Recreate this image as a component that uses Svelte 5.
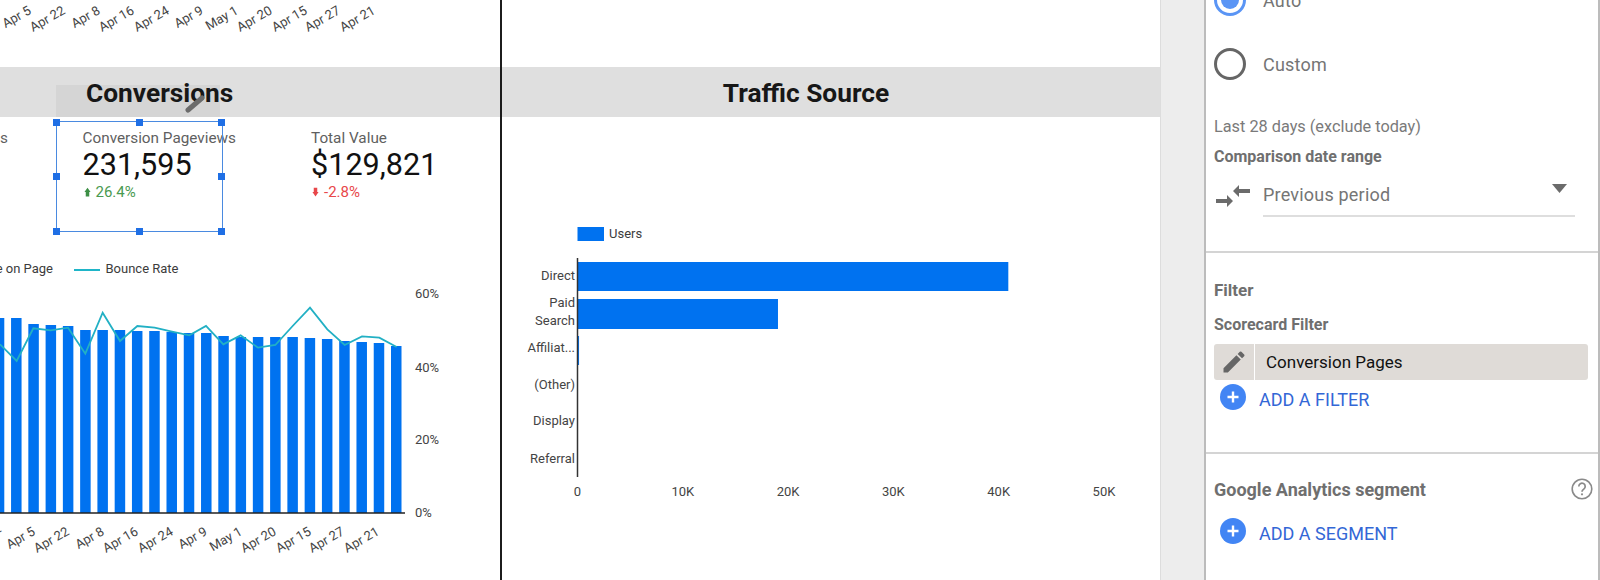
<script lang="ts">
  const dates = ['Apr 5', 'Apr 22', 'Apr 8', 'Apr 16', 'Apr 24', 'Apr 9', 'May 1', 'Apr 20', 'Apr 15', 'Apr 27', 'Apr 21'];
  const dateEnds = [32, 66, 101, 135, 170, 204, 239, 273, 308, 341, 376];

  // bar tops, left to right, in chart pixels (baseline is 512)
  const barTops = [317, 317, 323, 324, 325, 329, 329, 329, 330, 330, 331, 332, 332, 335, 336, 336, 336, 336, 337, 338, 340, 341, 342, 345];
  const bars = barTops.map((top, i) => ({ x: 391 - 17.27 * (barTops.length - 1 - i), top }));

  const bounce = [[0,190],[50,240],[100,142],[152,148],[204,140],[256,218],[308,95],[360,180],[412,135],[464,140],[516,152],[568,163],[618,135],[670,190],[722,163],[774,200],[826,192],[878,135],[930,80],[982,145],[1034,192],[1086,166],[1138,170],[1190,198]];
  const bouncePoints = bounce.map(([x, y]) => `${x / 3},${y / 3 + 280}`).join(' ');

  const percentTicks = [['60%', 294], ['40%', 367.5], ['20%', 440], ['0%', 513]];

  const sources = [
    { label: ['Direct'], y: 276, users: 41100, top: 261, h: 29 },
    { label: ['Paid', 'Search'], y: 303, users: 19100, top: 298, h: 30 },
    { label: ['Affiliat...'], y: 348, users: 100, top: 335, h: 29 },
    { label: ['(Other)'], y: 385, users: 0, top: 0, h: 0 },
    { label: ['Display'], y: 421, users: 0, top: 0, h: 0 },
    { label: ['Referral'], y: 459, users: 0, top: 0, h: 0 }
  ];
  const userTicks = ['0', '10K', '20K', '30K', '40K', '50K'];
  const handles = [[0, 0], [50, 0], [100, 0], [0, 50], [100, 50], [0, 100], [50, 100], [100, 100]];
</script>

{#snippet pencil(size)}
  <svg width={size} height={size} viewBox="0 0 24 24" fill="#666"><path d="M3 17.25V21h3.75L17.81 9.94l-3.75-3.75L3 17.25zM20.71 7.04a1 1 0 0 0 0-1.41l-2.34-2.34a1 1 0 0 0-1.41 0l-1.83 1.83 3.75 3.75 1.83-1.83z"/></svg>
{/snippet}

{#snippet plus()}
  <svg width="26" height="26" viewBox="0 0 26 26"><circle cx="13" cy="13" r="13" fill="#4285f4"/><path d="M13 7.5v11M7.5 13h11" stroke="#fff" stroke-width="2.4"/></svg>
{/snippet}

<div class="page">
  <section class="report">
    <svg class="dates" width="500" height="67">
      {#each dates as d, i}
        <text class="date" text-anchor="end" transform="translate({dateEnds[i]} 13) rotate(-30)">{d}</text>
      {/each}
    </svg>

    <div class="band start">
      <div class="hover-strip"></div>
      <h2>Conversions</h2>
      <svg class="edit-mark" width="24" height="20" viewBox="0 0 24 20"><path d="M3 17 L17 5" stroke="#6b6b6b" stroke-width="5" stroke-linecap="round"/></svg>
    </div>

    <div class="cards">
      <div class="stub"><div class="label">s</div></div>
      <div class="card">
        <div class="label">Conversion Pageviews</div>
        <div class="value">231,595</div>
        <div class="delta up">
          <svg width="7" height="12" viewBox="0 0 8 12"><path d="M4 1 7.5 6H6v5H2V6H.5z" fill="#3d8f45"/></svg>
          26.4%
        </div>
      </div>
      <div class="card">
        <div class="label">Total Value</div>
        <div class="value">$129,821</div>
        <div class="delta down">
          <svg width="7" height="12" viewBox="0 0 8 12"><path d="M4 11 .5 6H2V1h4v5h1.500z" fill="#e8474a"/></svg>
          -2.8%
        </div>
      </div>
      <div class="selection">
        {#each handles as [x, y]}
          <span class="handle" style="left: {x}%; top: {y}%"></span>
        {/each}
      </div>
    </div>

    <svg class="combo" width="500" height="330" viewBox="0 250 500 330">
      <text class="legend" x="53" y="272" text-anchor="end">Time on Page</text>
      <line x1="74" x2="100" y1="269" y2="269" stroke="#1fb5c8" stroke-width="2"/>
      <text class="legend" x="105.500" y="272">Bounce Rate</text>

      {#each bars as b}
        <rect x={b.x} y={b.top} width="10.500" height={512 - b.top} fill="#0072f0"/>
      {/each}
      <line x1="0" x2="405" y1="512" y2="512" stroke="#222" stroke-width="1.500"/>
      <polyline points={bouncePoints} fill="none" stroke="#22b0c4" stroke-width="1.800"/>

      {#each percentTicks as [t, y]}
        <text class="tick" x="415" y={+y + 3}>{t}</text>
      {/each}

      <text class="date" text-anchor="end" transform="translate(2 530) rotate(-30)">Apr 2</text>
      {#each dates as d, i}
        <text class="date" text-anchor="end" transform="translate({dateEnds[i] + 4} 533) rotate(-30)">{d}</text>
      {/each}
    </svg>
  </section>

  <section class="traffic">
    <div class="band shifted"><h2>Traffic Source</h2></div>
    <svg class="bars" width="658" height="464" viewBox="502 116 658 464">
      <rect x="577.500" y="226" width="26.500" height="14" fill="#0072f0"/>
      <text class="legend" x="609" y="237">Users</text>

      {#each sources as s}
        {#if s.h}
          <rect x="578" y={s.top} width={Math.max(s.users * 0.01047, 1)} height={s.h} fill="#0072f0"/>
        {/if}
        {#each s.label as line, i}
          <text class="tick" x="575" y={s.y + 3 + i * 18} text-anchor="end">{line}</text>
        {/each}
      {/each}
      <line x1="577.500" x2="577.500" y1="257" y2="476" stroke="#333" stroke-width="1.500"/>

      {#each userTicks as t, i}
        <text class="tick" x={577.500 + i * 105.300} y="494.500" text-anchor="middle">{t}</text>
      {/each}
    </svg>
  </section>

  <div class="gutter"></div>

  <aside class="panel">
    <div class="block date-block">
      <div class="radio-row">
        <span class="radio on"><span class="dot"></span></span>
        <span class="text">Auto</span>
      </div>
      <div class="radio-row custom">
        <span class="radio"></span>
        <span class="text">Custom</span>
      </div>
      <p class="hint">Last 28 days (exclude today)</p>
      <h4>Comparison date range</h4>
      <div class="select-row">
        <svg width="34" height="24" viewBox="0 0 34 24" fill="#6b6b6b"><path d="M0 15h11v-4l6 6-6 6v-4H0zM34 9H23v4l-6-6 6-6v4h11z"/></svg>
        <div class="select">
          <span class="text">Previous period</span>
          <svg width="15" height="9" viewBox="0 0 15 9"><path d="M0 0h15L7.500 9z" fill="#6b6b6b"/></svg>
        </div>
      </div>
    </div>

    <div class="block filter-block">
      <h3>Filter</h3>
      <h4>Scorecard Filter</h4>
      <div class="chip">
        <span class="chip-icon">{@render pencil(28)}</span>
        <span class="chip-name">Conversion Pages</span>
      </div>
      <div class="add-row">{@render plus()}<span>ADD A FILTER</span></div>
    </div>

    <div class="block segment-block">
      <div class="segment-head">
        <h3>Google Analytics segment</h3>
        <svg width="22" height="22" viewBox="0 0 22 22">
          <circle cx="11" cy="11" r="9.800" fill="none" stroke="#8a8a8a" stroke-width="1.600"/>
          <path d="M7.800 8.500a3.200 3.200 0 1 1 5 2.600c-1.100.8-1.800 1.300-1.800 2.700" fill="none" stroke="#8a8a8a" stroke-width="1.700"/>
          <circle cx="11" cy="16.300" r="1.100" fill="#8a8a8a"/>
        </svg>
      </div>
      <div class="add-row">{@render plus()}<span>ADD A SEGMENT</span></div>
    </div>
  </aside>
</div>

<style>
  :global(body) {
    margin: 0;
    background: #fff;
    font-family: Roboto, "Liberation Sans", sans-serif;
  }

  .page {
    display: flex;
    width: 1600px;
    height: 580px;
    overflow: hidden;
  }

  svg {
    display: block;
    flex: none;
  }

  .report {
    width: 500px;
    flex: none;
    border-right: 2px solid #1c1c1c;
  }

  .traffic {
    width: 658px;
    flex: none;
    padding-top: 67px;
    box-sizing: border-box;
  }

  .band {
    position: relative;
    height: 50px;
    background: #dfdfdf;
    display: flex;
    align-items: center;
    box-sizing: border-box;
    padding-top: 2px;
  }

  .start {
    padding-left: 86px;
  }

  .shifted {
    justify-content: center;
    padding-right: 50px;
  }

  h2 {
    margin: 0;
    position: relative;
    font-size: 26.300px;
    font-weight: 700;
    color: #171717;
    white-space: nowrap;
  }

  .hover-strip {
    position: absolute;
    left: 56px;
    top: 18px;
    width: 164px;
    height: 32px;
    background: #d5d5d5;
  }

  .edit-mark {
    position: absolute;
    left: 185px;
    top: 26px;
  }

  .date {
    font-size: 13px;
    fill: #454545;
  }

  .legend {
    font-size: 13px;
    fill: #3c3c3c;
  }

  .tick {
    font-size: 13px;
    fill: #444;
  }

  .cards {
    position: relative;
    display: flex;
    height: 134px;
    padding-top: 12px;
    box-sizing: border-box;
  }

  .stub {
    width: 82.500px;
    flex: none;
  }

  .card {
    width: 228.500px;
    flex: none;
  }

  .label {
    font-size: 15.300px;
    line-height: 18px;
    color: #5f5f5f;
    white-space: nowrap;
  }

  .value {
    font-size: 30.600px;
    line-height: 36px;
    color: #111;
  }

  .delta {
    display: flex;
    align-items: center;
    gap: 5px;
    font-size: 15px;
    line-height: 18px;
    padding-left: 1px;
  }

  .up {
    color: #4a9a50;
  }

  .down {
    color: #e8474a;
  }

  .selection {
    position: absolute;
    left: 55.500px;
    top: 4px;
    width: 167px;
    height: 111px;
    border: 1.500px solid #4a8ae0;
    box-sizing: border-box;
  }

  .handle {
    position: absolute;
    width: 7px;
    height: 7px;
    margin: -3.500px 0 0 -3.500px;
    background: #1f6fe5;
  }

  .gutter {
    width: 44px;
    flex: none;
    background: #ededed;
    border-left: 1px solid #ddd;
    box-sizing: border-box;
  }

  .panel {
    width: 396px;
    flex: none;
    box-sizing: border-box;
    border-left: 2px solid #bcbcbc;
    border-right: 2px solid #bcbcbc;
    color: #757575;
  }

  .block {
    padding-left: 8px;
    box-sizing: border-box;
    border-bottom: 2px solid #d4d4d4;
  }

  .date-block {
    height: 269px;
    margin-top: -16px;
  }

  .radio-row {
    display: flex;
    align-items: center;
    gap: 17px;
    height: 32px;
  }

  .custom {
    margin-top: 32px;
  }

  .text {
    font-size: 18px;
    letter-spacing: 0.2px;
    color: #757575;
  }

  .radio {
    width: 32px;
    height: 32px;
    flex: none;
    box-sizing: border-box;
    border: 3px solid #666;
    border-radius: 50%;
    display: flex;
    align-items: center;
    justify-content: center;
  }

  .on {
    border-color: #5a95f5;
  }

  .dot {
    width: 18px;
    height: 18px;
    border-radius: 50%;
    background: #5a95f5;
  }

  .hint {
    margin: 37px 0 0;
    font-size: 16.300px;
    line-height: 20px;
    color: #7a7a7a;
  }

  h3,
  h4 {
    margin: 0;
    font-weight: 700;
    color: #6f6f6f;
  }

  h4 {
    font-size: 16px;
    line-height: 20px;
    margin-top: 10px;
  }

  .select-row {
    display: flex;
    align-items: flex-start;
    gap: 13px;
    margin-top: 17px;
    padding-left: 2px;
  }

  .select {
    width: 312px;
    height: 33px;
    display: flex;
    justify-content: space-between;
    align-items: flex-start;
    border-bottom: 2px solid #dedede;
    padding: 0 8px 0 0;
    box-sizing: border-box;
  }

  .select svg {
    margin-top: 0;
  }

  .filter-block {
    height: 201px;
    padding-top: 27px;
  }

  .filter-block h3 {
    font-size: 17px;
    line-height: 20px;
  }

  .filter-block h4 {
    margin-top: 15px;
  }

  .chip {
    display: flex;
    width: 374px;
    height: 36px;
    margin-top: 9px;
    border-radius: 3px;
    overflow: hidden;
    background: #dfdbd7;
  }

  .chip-icon {
    width: 41px;
    flex: none;
    display: flex;
    align-items: center;
    justify-content: center;
    border-right: 1px solid #fff;
    box-sizing: border-box;
  }

  .chip-name {
    padding-left: 11px;
    font-size: 17px;
    line-height: 36px;
    color: #111;
  }

  .add-row {
    display: flex;
    align-items: center;
    gap: 13px;
    padding-left: 6px;
    margin-top: 4px;
    font-size: 18px;
    color: #3367d6;
  }

  .add-row span {
    margin-top: 5px;
  }

  .segment-block {
    border-bottom: 0;
    padding-top: 24px;
  }

  .segment-head {
    display: flex;
    justify-content: space-between;
    align-items: center;
    padding-right: 5px;
  }

  .segment-head h3 {
    font-size: 18px;
  }

  .segment-block .add-row {
    margin-top: 17.500px;
  }
</style>
